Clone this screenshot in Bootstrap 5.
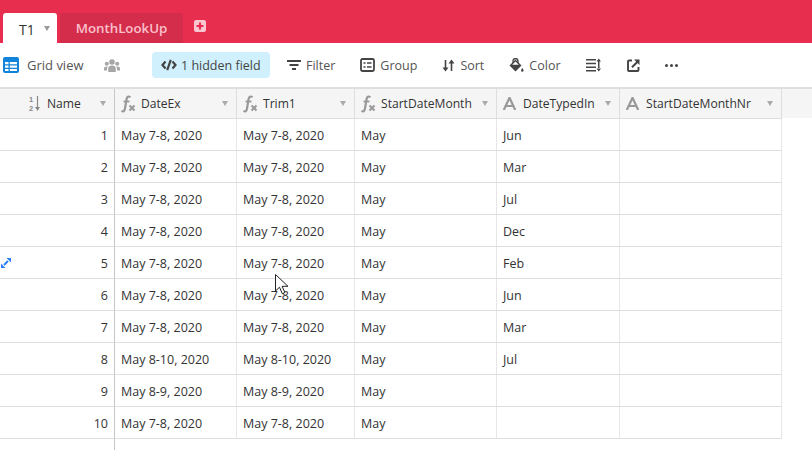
<!DOCTYPE html>
<html lang="en">
<head>
    <meta charset="UTF-8">
    <title>T1: Grid view</title>
    <link href="https://cdn.jsdelivr.net/npm/bootstrap@5.3.0/dist/css/bootstrap.min.css" rel="stylesheet">
    <style>
        html, body { height: 100%; overflow: hidden; }
        body {
            font-family: "Open Sans", "Noto Sans", sans-serif;
            font-size: 12.5px;
            color: #333;
            background: #fff;
            position: relative;
        }
        .app-tabbar {
            height: 43px;
            background: #e82e4e;
            padding: 13px 0 0 3px;
        }
        .base-tab {
            height: 30px;
            border-radius: 3px 3px 0 0;
            font-size: 14px;
            padding-top: 2px;
        }
        .base-tab-active { width: 54px; background: #fff; color: #333; padding-left: 16px; }
        .base-tab-other { width: 123px; margin-left: 3px; background: #d42d4b; color: #fbc0cb; font-size: 13.3px; font-weight: 600; justify-content: center; }
        .tab-caret { width: 0; height: 0; border: 3.5px solid transparent; border-top: 5px solid #999; border-bottom: 0; margin-left: 9px; margin-top: -2px; }
        .tab-add { margin: -4px 0 0 11px; }
        .view-bar { height: 44px; }
        .view-icon { margin-left: 3px; }
        .view-name { font-size: 13px; font-weight: 500; color: #555; margin-left: 8px; width: 61px; padding-top: 2px; }
        .people-icon { margin-left: 16px; }
        .tool-item { display: flex; align-items: center; color: #555; font-size: 12.5px; font-weight: 500; }
        .tool-item span { margin-left: 5px; padding-top: 2px; }
        .hidden-btn { width: 118px; height: 26px; margin-left: 32px; padding-left: 9px; background: #d0f0fd; border-radius: 4px; color: #444; }
        .hidden-btn span { margin-left: 4px; }
        .tool-filter { margin-left: 17px; }
        .tool-group { margin-left: 25px; }
        .tool-sort { margin-left: 25px; }
        .tool-color { margin-left: 25px; }
        .tool-height { margin-left: 25px; }
        .tool-share { margin-left: 26px; }
        .tool-more { margin-left: 25px; }
        .grid-wrap {
            height: 363px;
            border-top: 2px solid #dedede;
            background: linear-gradient(#f5f5f5, #f5f5f5) no-repeat 0 0 / 100% 29px, #fff;
        }
        .data-grid { table-layout: fixed; width: 782px; margin: 0; border-collapse: separate; border-spacing: 0; --bs-table-bg: transparent; }
        .data-grid th, .data-grid td {
            padding: 0 6px;
            border: 0;
            border-right: 1px solid #e6e6e6;
            border-bottom: 1px solid #dedede;
            height: 32px;
            vertical-align: middle;
            white-space: nowrap;
            overflow: hidden;
            font-weight: 400;
            font-size: 12.5px;
            color: #333;
            box-shadow: none;
        }
        .data-grid td { padding-top: 4px; }
        .data-grid th { height: 30px; background: #f5f5f5; border-right-color: #dedede; font-size: 12.1px; padding-top: 1px; }
        .data-grid .col-name { border-right: 1px solid #c8c8c8; text-align: right; }
        .data-grid th.col-name { text-align: left; }
        .head-cell { display: flex; align-items: center; }
        .head-cell svg { flex: none; margin-right: 5px; }
        .head-cell .text-type-icon { margin-right: 7px; }
        .head-name { padding-left: 23px; }
        .sort-digits { font-family: "Liberation Sans", sans-serif; font-size: 7.5px; line-height: 9px; font-weight: 700; color: #888; width: 6px; flex: none; }
        .head-cell .sort-arrow { margin-right: 7px; }
        .head-caret { width: 0; height: 0; border: 3.5px solid transparent; border-top: 5px solid #aaa; border-bottom: 0; margin-left: auto; margin-right: 2px; }
        .col-rail { position: absolute; left: 114px; top: 439px; width: 1px; height: 11px; background: #c8c8c8; }
        .row-expand { position: absolute; left: 1px; top: 258px; }
        .mouse-cursor { position: absolute; left: 275px; top: 274px; }
    </style>
</head>
<body>
    <svg width="0" height="0" class="position-absolute">
        <symbol id="fx" viewBox="0 0 15 18">
            <path d="M9.500 2.200C7.500.800 6 1.500 5.500 4.500L4 13.500C3.500 16.500 2 17 .5 15.800" fill="none" stroke="#999" stroke-width="2.200"/>
            <path d="M2.500 6.500h6" fill="none" stroke="#999" stroke-width="1.800"/>
            <path d="M8.500 10.500l5 5M13.500 10.500l-5 5" fill="none" stroke="#999" stroke-width="2"/>
        </symbol>
        <symbol id="txt" viewBox="0 0 13 13">
            <path d="M.8 13 6.500 .8 12.200 13M3 9h7" fill="none" stroke="#999" stroke-width="2.200"/>
        </symbol>
    </svg>

    <div class="app-tabbar d-flex align-items-start">
        <div class="base-tab base-tab-active d-flex align-items-center">T1<i class="tab-caret"></i></div>
        <div class="base-tab base-tab-other d-flex align-items-center">MonthLookUp</div>
        <svg class="tab-add align-self-center" width="12" height="12" viewBox="0 0 12 12"><rect width="12" height="12" rx="2" fill="#fbc6d0"/><path d="M6 2.500v7M2.500 6h7" stroke="#e82e4e" stroke-width="2.200"/></svg>
    </div>

    <div class="view-bar d-flex align-items-center">
        <svg class="view-icon" width="16" height="16" viewBox="0 0 16 16"><rect width="16" height="16" rx="2" fill="#1283da"/><path d="M2 5h3.500v2.300H2zM6.800 5H14v2.300H6.800zM2 8.500h3.500v2.300H2zM6.800 8.500H14v2.300H6.800zM2 12h3.500v2H2zM6.800 12H14v2H6.800z" fill="#fff"/></svg>
        <div class="view-name">Grid view</div>
        <svg class="people-icon" width="16" height="13" viewBox="0 0 16 13" fill="#a6a6a6"><circle cx="8" cy="3" r="2.800"/><circle cx="2.800" cy="4.700" r="2"/><circle cx="13.200" cy="4.700" r="2"/><path d="M4.200 13V9.500c0-2 1.600-3 3.800-3s3.800 1 3.800 3V13zM0 11.500v-2C0 8.200 1 7.500 2.500 7.500c.5 0 .9.100 1.200.200-.5.600-.7 1.200-.7 2v1.800zM16 11.500v-2c0-1.300-1-2-2.500-2-.5 0-.9.100-1.200.200.5.600.7 1.200.7 2v1.800z"/></svg>

        <div class="tool-item hidden-btn">
            <svg width="16" height="12" viewBox="0 0 16 12" fill="none" stroke="#444" stroke-width="2.200"><path d="M4.500 2.500 1.500 6l3 3.500M11.500 2.500l3 3.500-3 3.500"/><path d="M9.800 .8 6.200 11.200"/></svg>
            <span>1 hidden field</span>
        </div>
        <div class="tool-item tool-filter">
            <svg width="14" height="12" viewBox="0 0 14 12" fill="#444"><path d="M0 1h14v2H0zM2.500 5h9v2h-9zM5 9h4v2H5z"/></svg>
            <span>Filter</span>
        </div>
        <div class="tool-item tool-group">
            <svg width="15" height="14" viewBox="0 0 15 14" fill="none" stroke="#444"><rect x="1" y="1" width="13" height="12" rx="1.500" stroke-width="1.800"/><path d="M3.500 5h2M7 5h4.500M3.500 9h2M7 9h4.500" stroke-width="1.500"/></svg>
            <span>Group</span>
        </div>
        <div class="tool-item tool-sort">
            <svg width="13" height="13" viewBox="0 0 13 13" fill="#444"><path d="M2.700 1h1.600v7.500H6.500L3.500 12.500 .5 8.500h2.200zM8.700 12h1.600V4.500h2.200L9.500 .5 6.500 4.500h2.200z"/></svg>
            <span>Sort</span>
        </div>
        <div class="tool-item tool-color">
            <svg width="15" height="15" viewBox="0 0 15 15"><path d="M4 5V3a2.500 2.500 0 0 1 5 0v2" fill="none" stroke="#444" stroke-width="1.300"/><path d="M6.500 1.500 12.500 7.500 6.500 13.500 .5 7.500z" fill="#444"/><path d="M3.200 6.800 6.500 3.500l3.300 3.300z" fill="#fff"/><path d="M13.300 10c.8 1.200 1.200 1.900 1.200 2.500a1.200 1.200 0 0 1-2.400 0c0-.6.400-1.300 1.200-2.500z" fill="#444"/></svg>
            <span>Color</span>
        </div>
        <div class="tool-item tool-height">
            <svg width="15" height="14" viewBox="0 0 15 14" fill="#444"><path d="M0 1h10v1.600H0zM0 4.700h10v1.600H0zM0 8.400h10v1.600H0zM0 12h10v1.600H0z"/><path d="M12 3h1.500v8H12zM12.750 .5 15 3.500h-4.500zM12.750 13.500 15 10.500h-4.500z"/></svg>
        </div>
        <div class="tool-item tool-share">
            <svg width="13" height="13" viewBox="0 0 13 13" fill="none" stroke="#444"><path d="M5 1.500H2A1 1 0 0 0 1 2.500v8.500a1 1 0 0 0 1 1h8.500a1 1 0 0 0 1-1V8" stroke-width="1.900"/><path d="M5 8.200 11 2.200" stroke-width="2"/><path d="M7 .5h5.500V6z" fill="#444" stroke="none"/></svg>
        </div>
        <div class="tool-item tool-more">
            <svg width="13" height="3" viewBox="0 0 13 3" fill="#444"><circle cx="1.500" cy="1.500" r="1.500"/><circle cx="6.500" cy="1.500" r="1.500"/><circle cx="11.500" cy="1.500" r="1.500"/></svg>
        </div>
    </div>

    <div class="grid-wrap">
        <table class="table data-grid">
            <colgroup>
                <col style="width:115px"><col style="width:122px"><col style="width:118px"><col style="width:142px"><col style="width:123px"><col style="width:162px">
            </colgroup>
            <thead>
                <tr>
                    <th class="col-name">
                        <div class="head-cell head-name">
                            <div class="sort-digits">1<br>2</div>
                            <svg class="sort-arrow" width="5" height="15" viewBox="0 0 5 15" fill="#888"><path d="M1.900 0h1.200v11h1.900L2.500 15 0 11h1.900z"/></svg>
                            <span>Name</span><i class="head-caret"></i>
                        </div>
                    </th>
                    <th><div class="head-cell"><svg width="15" height="18"><use href="#fx"/></svg><span>DateEx</span><i class="head-caret"></i></div></th>
                    <th><div class="head-cell"><svg width="15" height="18"><use href="#fx"/></svg><span>Trim1</span><i class="head-caret"></i></div></th>
                    <th><div class="head-cell"><svg width="15" height="18"><use href="#fx"/></svg><span>StartDateMonth</span><i class="head-caret"></i></div></th>
                    <th><div class="head-cell"><svg class="text-type-icon" width="13" height="13"><use href="#txt"/></svg><span>DateTypedIn</span><i class="head-caret"></i></div></th>
                    <th><div class="head-cell"><svg class="text-type-icon" width="13" height="13"><use href="#txt"/></svg><span>StartDateMonthNr</span><i class="head-caret"></i></div></th>
                </tr>
            </thead>
            <tbody>
                <tr><td class="col-name">1</td><td>May 7-8, 2020</td><td>May 7-8, 2020</td><td>May</td><td>Jun</td><td></td></tr>
                <tr><td class="col-name">2</td><td>May 7-8, 2020</td><td>May 7-8, 2020</td><td>May</td><td>Mar</td><td></td></tr>
                <tr><td class="col-name">3</td><td>May 7-8, 2020</td><td>May 7-8, 2020</td><td>May</td><td>Jul</td><td></td></tr>
                <tr><td class="col-name">4</td><td>May 7-8, 2020</td><td>May 7-8, 2020</td><td>May</td><td>Dec</td><td></td></tr>
                <tr><td class="col-name">5</td><td>May 7-8, 2020</td><td>May 7-8, 2020</td><td>May</td><td>Feb</td><td></td></tr>
                <tr><td class="col-name">6</td><td>May 7-8, 2020</td><td>May 7-8, 2020</td><td>May</td><td>Jun</td><td></td></tr>
                <tr><td class="col-name">7</td><td>May 7-8, 2020</td><td>May 7-8, 2020</td><td>May</td><td>Mar</td><td></td></tr>
                <tr><td class="col-name">8</td><td>May 8-10, 2020</td><td>May 8-10, 2020</td><td>May</td><td>Jul</td><td></td></tr>
                <tr><td class="col-name">9</td><td>May 8-9, 2020</td><td>May 8-9, 2020</td><td>May</td><td></td><td></td></tr>
                <tr><td class="col-name">10</td><td>May 7-8, 2020</td><td>May 7-8, 2020</td><td>May</td><td></td><td></td></tr>
            </tbody>
        </table>
    </div>

    <div class="col-rail"></div>

    <!-- row hover expand icon -->
    <svg class="row-expand" width="10" height="10" viewBox="0 0 10 10" fill="#2d7ff9"><path d="M5.500 0H10v4.500zM0 10V5.500L4.500 10z"/><path d="M2.300 6.300 6.300 2.300 7.700 3.700 3.700 7.700z"/></svg>

    <svg class="mouse-cursor" width="14" height="22" viewBox="0 0 14 22"><path d="M.5.500v16.500l4-3.800 2.800 6.500 2.600-1.100-2.800-6.300H13z" fill="#fff" stroke="#222"/></svg>

    <script src="https://cdn.jsdelivr.net/npm/bootstrap@5.3.0/dist/js/bootstrap.bundle.min.js"></script>
</body>
</html>
